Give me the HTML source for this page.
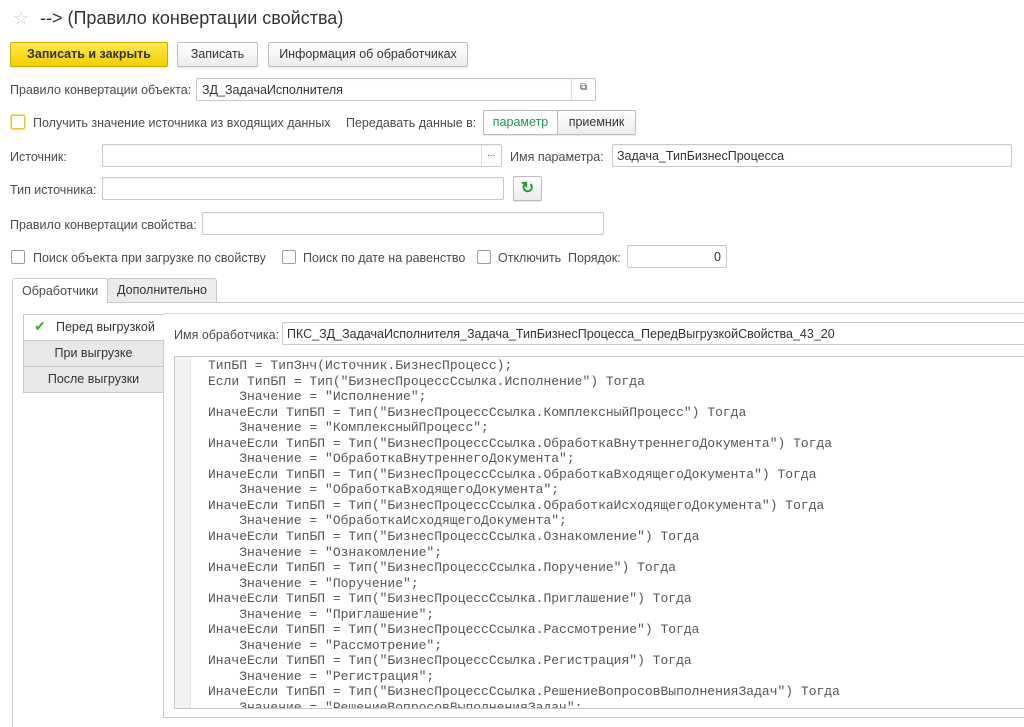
<!DOCTYPE html>
<html><head><meta charset="utf-8"><style>
*{box-sizing:border-box;margin:0;padding:0}
body{width:1024px;height:727px;background:#fff;font-family:"Liberation Sans",sans-serif;font-size:12.5px;color:#4a4a4a;position:relative;overflow:hidden}
.a{position:absolute;white-space:nowrap}
.in{position:absolute;border:1px solid #c8c8c8;border-radius:2px;background:#fff;height:23px;box-shadow:inset 0 1px 1px rgba(0,0,0,.04)}
.btn{position:absolute;height:25px;border:1px solid #bdbdbd;border-radius:2px;background:linear-gradient(#fff,#ececec);text-align:center;line-height:23px;color:#333;box-shadow:0 1px 1px rgba(0,0,0,.1)}
.cb{position:absolute;width:14px;height:14px;border:1px solid #9c9c9c;border-radius:2px;background:#fff}
pre{position:absolute;font-family:"Liberation Mono",monospace;font-size:13px;line-height:15.55px;color:#555}
</style></head><body>
<div class="a" style="left:13px;top:8px;font-size:18px;color:#ccc">☆</div>
<div class="a" style="left:40px;top:8px;font-size:18px;color:#333">--&gt; (Правило конвертации свойства)</div>
<div class="btn" style="left:10px;top:42px;width:158px;background:linear-gradient(#ffe94d,#f0d000);border-color:#c9ae00;font-weight:bold;color:#333">Записать и закрыть</div>
<div class="btn" style="left:177px;top:42px;width:81px">Записать</div>
<div class="btn" style="left:268px;top:42px;width:200px">Информация об обработчиках</div>
<div class="a" style="left:10px;top:83px">Правило конвертации объекта:</div>
<div class="in" style="left:196px;top:78px;width:400px"><span class="a" style="left:5px;top:4px;color:#333">ЗД_ЗадачаИсполнителя</span><span class="a" style="left:374px;top:0;width:1px;height:21px;background:#ddd"></span><span class="a" style="left:383px;top:3px;font-size:10px">⧉</span></div>
<div class="cb" style="left:11px;top:115px;border-color:#e8c43a;box-shadow:0 0 0 1px #f3dc7a"></div>
<div class="a" style="left:33px;top:116px">Получить значение источника из входящих данных</div>
<div class="a" style="left:346px;top:116px">Передавать данные в:</div>
<div class="btn" style="left:483px;top:110px;width:75px;background:#fff;color:#1a9a4a">параметр</div>
<div class="btn" style="left:557px;top:110px;width:79px">приемник</div>
<div class="a" style="left:10px;top:150px">Источник:</div>
<div class="in" style="left:102px;top:144px;width:400px"><span class="a" style="left:378px;top:0;width:1px;height:21px;background:#ddd"></span><span class="a" style="left:384px;top:3px;font-size:10px">...</span></div>
<div class="a" style="left:510px;top:150px">Имя параметра:</div>
<div class="in" style="left:612px;top:144px;width:400px"><span class="a" style="left:4px;top:4px;color:#333">Задача_ТипБизнесПроцесса</span></div>
<div class="a" style="left:10px;top:183px">Тип источника:</div>
<div class="in" style="left:102px;top:177px;width:402px"></div>
<div class="btn" style="left:513px;top:176px;width:29px;font-size:16px;color:#2a9a3a;font-weight:bold">↻</div>
<div class="a" style="left:10px;top:218px">Правило конвертации свойства:</div>
<div class="in" style="left:202px;top:212px;width:402px"></div>
<div class="cb" style="left:11px;top:250px"></div>
<div class="a" style="left:33px;top:251px">Поиск объекта при загрузке по свойству</div>
<div class="cb" style="left:282px;top:250px"></div>
<div class="a" style="left:303px;top:251px">Поиск по дате на равенство</div>
<div class="cb" style="left:477px;top:250px"></div>
<div class="a" style="left:498px;top:251px">Отключить</div>
<div class="a" style="left:568px;top:251px">Порядок:</div>
<div class="in" style="left:627px;top:245px;width:100px"><span class="a" style="right:5px;top:4px;color:#333">0</span></div>
<!-- tabs -->
<div class="a" style="left:107px;top:302px;width:917px;height:1px;background:#c8c8c8"></div>
<div class="a" style="left:12px;top:278px;width:96px;height:25px;border:1px solid #c8c8c8;border-bottom:none;border-radius:3px 3px 0 0;background:#fff"></div>
<div class="a" style="left:12px;top:300px;width:1px;height:427px;background:#c8c8c8"></div>
<div class="a" style="left:22px;top:284px">Обработчики</div>
<div class="a" style="left:107px;top:278px;width:110px;height:25px;border:1px solid #c8c8c8;border-radius:3px 3px 0 0;background:#ececec;line-height:23px;text-align:center;color:#333">Дополнительно</div>
<div class="a" style="left:163px;top:313px;width:861px;height:1px;background:#ddd"></div>
<div class="a" style="left:163px;top:340px;width:1px;height:378px;background:#c8c8c8"></div>
<div class="a" style="left:163px;top:717px;width:861px;height:1px;background:#c8c8c8"></div>
<div class="a" style="left:23px;top:314px;width:141px;height:27px;border:1px solid #c8c8c8;border-right:none;background:#fff"><span class="a" style="left:10px;top:3px;color:#3aaa3a;font-size:14px">✔</span><span class="a" style="left:32px;top:5px;color:#333">Перед выгрузкой</span></div>
<div class="a" style="left:23px;top:340px;width:141px;height:27px;border:1px solid #c8c8c8;background:#e8e8e8;text-align:center;line-height:25px;color:#333">При выгрузке</div>
<div class="a" style="left:23px;top:366px;width:141px;height:27px;border:1px solid #c8c8c8;background:#e8e8e8;text-align:center;line-height:25px;color:#333">После выгрузки</div>
<div class="a" style="left:174px;top:328px">Имя обработчика:</div>
<div class="in" style="left:282px;top:322px;width:760px"><span class="a" style="left:4px;top:4px;color:#333">ПКС_ЗД_ЗадачаИсполнителя_Задача_ТипБизнесПроцесса_ПередВыгрузкойСвойства_43_20</span></div>
<div class="a" style="left:174px;top:356px;width:860px;height:353px;border:1px solid #c8c8c8;background:#fff;overflow:hidden"><div style="position:absolute;left:0;top:0;width:16px;height:100%;background:#f2f2f2;border-right:1px solid #e6e6e6"></div></div>
<div class="a" style="left:175px;top:357px;width:849px;height:351px;overflow:hidden"><pre style="left:33px;top:1px">ТипБП = ТипЗнч(Источник.БизнесПроцесс);
Если ТипБП = Тип("БизнесПроцессСсылка.Исполнение") Тогда
    Значение = "Исполнение";
ИначеЕсли ТипБП = Тип("БизнесПроцессСсылка.КомплексныйПроцесс") Тогда
    Значение = "КомплексныйПроцесс";
ИначеЕсли ТипБП = Тип("БизнесПроцессСсылка.ОбработкаВнутреннегоДокумента") Тогда
    Значение = "ОбработкаВнутреннегоДокумента";
ИначеЕсли ТипБП = Тип("БизнесПроцессСсылка.ОбработкаВходящегоДокумента") Тогда
    Значение = "ОбработкаВходящегоДокумента";
ИначеЕсли ТипБП = Тип("БизнесПроцессСсылка.ОбработкаИсходящегоДокумента") Тогда
    Значение = "ОбработкаИсходящегоДокумента";
ИначеЕсли ТипБП = Тип("БизнесПроцессСсылка.Ознакомление") Тогда
    Значение = "Ознакомление";
ИначеЕсли ТипБП = Тип("БизнесПроцессСсылка.Поручение") Тогда
    Значение = "Поручение";
ИначеЕсли ТипБП = Тип("БизнесПроцессСсылка.Приглашение") Тогда
    Значение = "Приглашение";
ИначеЕсли ТипБП = Тип("БизнесПроцессСсылка.Рассмотрение") Тогда
    Значение = "Рассмотрение";
ИначеЕсли ТипБП = Тип("БизнесПроцессСсылка.Регистрация") Тогда
    Значение = "Регистрация";
ИначеЕсли ТипБП = Тип("БизнесПроцессСсылка.РешениеВопросовВыполненияЗадач") Тогда
    Значение = "РешениеВопросовВыполненияЗадач";</pre></div>
</body></html>
